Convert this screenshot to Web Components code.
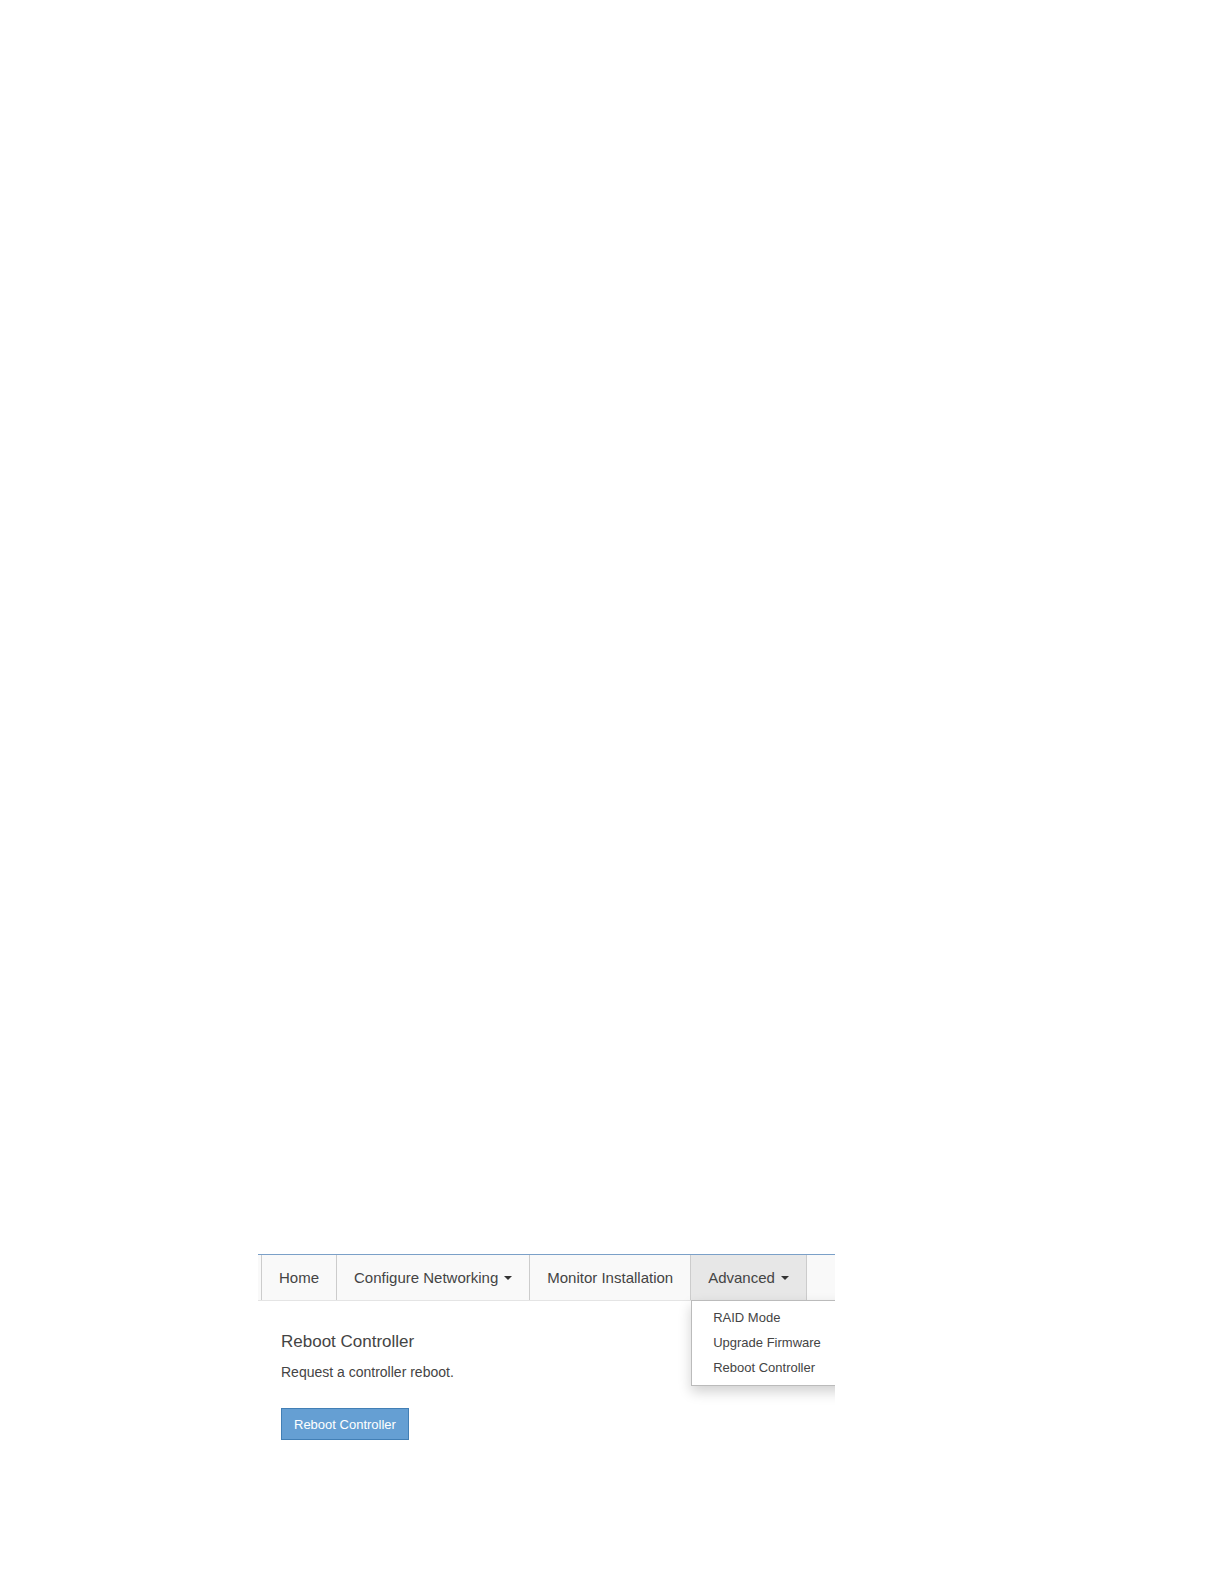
<!DOCTYPE html>
<html lang="en">
<head>
<meta charset="utf-8">
<title>Reboot Controller</title>
<style>
body { margin: 0; background: #fff; color: #444; font-family: "Liberation Sans", Arial, sans-serif; }
</style>
</head>
<body>
<app-page>
  <nav-bar>
    <nav-item>Home</nav-item>
    <nav-item menu>Configure Networking</nav-item>
    <nav-item>Monitor Installation</nav-item>
    <nav-item menu active>Advanced
      <drop-menu slot="menu">
        <menu-link>RAID Mode</menu-link>
        <menu-link>Upgrade Firmware</menu-link>
        <menu-link>Reboot Controller</menu-link>
      </drop-menu>
    </nav-item>
  </nav-bar>
  <action-panel heading="Reboot Controller" action="Reboot Controller">Request a controller reboot.</action-panel>
</app-page>
<script>
function define(name, html) {
  customElements.define(name, class extends HTMLElement {
    constructor() {
      super();
      this.attachShadow({ mode: "open" }).innerHTML = html;
    }
    connectedCallback() {
      for (const node of this.shadowRoot.querySelectorAll("[data-text]")) {
        node.textContent = this.getAttribute(node.dataset.text);
      }
    }
  });
}

define("app-page", `
<style>
:host { display: grid; grid-template-columns: 258fr 577fr 389fr; align-items: end; min-height: 100vh; box-sizing: border-box; padding-bottom: 132px; }
main { grid-column: 2; min-width: 0; overflow: hidden; padding-bottom: 12px; }
</style>
<main><slot></slot></main>`);

define("nav-bar", `
<style>
:host { display: block; }
nav { display: flex; height: 45px; padding-left: 3px; background: #f9f9f9; border-top: 1px solid #7ba0c8; border-bottom: 1px solid #e4e4e4; }
::slotted(nav-item:first-child) { border-left: 1px solid #ccc; }
</style>
<nav><slot></slot></nav>`);

define("nav-item", `
<style>
:host { display: block; position: relative; flex: none; border-right: 1px solid #ccc; font-size: 15px; line-height: 20px; }
a { display: flex; align-items: center; gap: 6px; height: 100%; box-sizing: border-box; padding: 0 17px; color: #444; text-decoration: none; white-space: nowrap; }
:host([active]) a { background: #e7e7e7; }
i { display: none; border: 4px solid transparent; border-top-color: #333; border-bottom: 0; }
:host([menu]) i { display: block; }
</style>
<a href="#"><span><slot></slot></span><i></i></a>
<slot name="menu"></slot>`);

define("drop-menu", `
<style>
:host { display: block; position: absolute; top: 100%; left: 0; min-width: 160px; padding: 4px 0 5px; background: #fff; border: 1px solid #bbb; box-shadow: 0 6px 12px rgba(0,0,0,.18); }
</style>
<slot></slot>`);

define("menu-link", `
<style>
:host { display: block; font-size: 13px; line-height: 25px; }
a { display: block; padding: 0 21px; color: #444; text-decoration: none; white-space: nowrap; }
</style>
<a href="#"><slot></slot></a>`);

define("action-panel", `
<style>
:host { display: block; padding: 29px 23px 0; }
h1 { margin: 0; font-size: 17px; line-height: 24px; font-weight: 400; }
p { margin: 8px 0 26px; font-size: 14px; line-height: 20px; }
button { display: block; height: 32px; padding: 0 12px; font: 13px "Liberation Sans", Arial, sans-serif; color: #fff; background: #659fd3; border: 1px solid #427fb5; border-radius: 0; }
</style>
<h1 data-text="heading"></h1>
<p><slot></slot></p>
<button type="button" data-text="action"></button>`);
</script>
</body>
</html>
